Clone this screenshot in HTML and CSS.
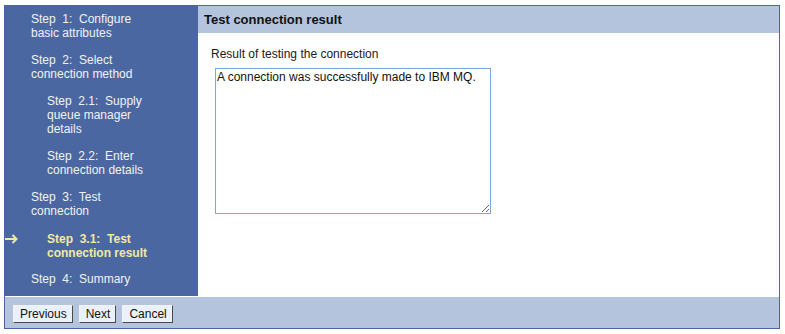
FILE: index.html
```html
<!DOCTYPE html>
<html>
<head>
<meta charset="utf-8">
<link rel="stylesheet" href="styles.css">
</head>
<body>
<div class="wizard">
  <nav class="steps">
    <div class="step"><span class="mark"></span><span class="label l1">Step&nbsp; 1:&nbsp; Configure basic attributes</span></div>
    <div class="step"><span class="mark"></span><span class="label l1">Step&nbsp; 2:&nbsp; Select connection method</span></div>
    <div class="step sub"><span class="mark"></span><span class="label l2">Step&nbsp; 2.1:&nbsp; Supply queue manager details</span></div>
    <div class="step sub"><span class="mark"></span><span class="label l2">Step&nbsp; 2.2:&nbsp; Enter connection details</span></div>
    <div class="step"><span class="mark"></span><span class="label l1">Step&nbsp; 3:&nbsp; Test connection</span></div>
    <div class="step sub current"><span class="mark"><svg class="arrow" width="13" height="10" viewBox="0 0 13 10"><path d="M0 5H11.5M7.5 1L11.5 5L7.5 9" fill="none" stroke="#f2e9a1" stroke-width="2"/></svg></span><span class="label l2">Step&nbsp; 3.1:&nbsp; Test connection result</span></div>
    <div class="step"><span class="mark"></span><span class="label l1">Step&nbsp; 4:&nbsp; Summary</span></div>
  </nav>
  <main class="panel">
    <div class="panel-head">Test connection result</div>
    <div class="panel-body">
      <div class="field-label">Result of testing the connection</div>
      <textarea class="result">A connection was successfully made to IBM MQ.</textarea>
    </div>
  </main>
  <footer class="actions">
    <button class="btn">Previous</button>
    <button class="btn">Next</button>
    <button class="btn">Cancel</button>
  </footer>
</div>
</body>
</html>
```
FILE: styles.css
```css
html, body {
  margin: 0;
  padding: 0;
  background: #ffffff;
}
body {
  padding: 5px 5px 5px 4px;
  font-family: "Liberation Sans", Arial, sans-serif;
  font-size: 12px;
}
.wizard {
  width: 776px;
  box-sizing: border-box;
  border: 1px solid #4b67a1;
  display: grid;
  grid-template-columns: 193px 1fr;
  grid-template-rows: 290px 32px;
}
.steps {
  background: #4b67a1;
  color: #f2f2f2;
  padding-top: 6px;
  display: flex;
  flex-direction: column;
  gap: 13px;
  line-height: 14px;
}
.step {
  display: flex;
}
.mark {
  width: 26px;
  flex: none;
  display: flex;
  align-items: center;
  height: 14px;
}
.arrow {
  display: block;
}
.sub .label {
  margin-left: 16px;
}
.label.l1 { width: 118px; }
.label.l2 { width: 102px; }
.current {
  margin-top: 1px;
  margin-bottom: -1px;
}
.current .label {
  font-weight: bold;
  color: #f2e9a1;
}
.panel {
  background: #ffffff;
  border-right: 1px solid #4b67a1;
  margin-right: -1px;
  display: flex;
  flex-direction: column;
}
.panel-head {
  background: #b3c4dc;
  height: 27px;
  line-height: 27px;
  padding-left: 6px;
  font-weight: bold;
  font-size: 13px;
  color: #111111;
}
.panel-body {
  padding: 14px 0 0 13px;
}
.field-label {
  color: #1a1a1a;
  line-height: 14px;
}
.result {
  display: block;
  margin: 7px 0 0 4px;
  width: 276px;
  height: 146px;
  box-sizing: border-box;
  border: 1px solid #84a8d4;
  padding: 1px 1px;
  font-family: "Liberation Sans", Arial, sans-serif;
  font-size: 12px;
  line-height: 14px;
  color: #111111;
  background: #ffffff;
}
.actions {
  grid-column: 1 / 3;
  background: #b3c4dc;
  border-top: 1px solid #ffffff;
  display: flex;
  align-items: flex-start;
  gap: 6px;
  padding: 8px 0 0 8px;
}
.btn {
  font-family: "Liberation Sans", Arial, sans-serif;
  font-size: 12px;
  height: 18px;
  padding: 0 5px 0 6px;
  background: #eaf1fb;
  color: #111111;
  border: 1px solid;
  border-color: #f4f4f4 #4a4a4a #4a4a4a #f4f4f4;
  line-height: 16px;
  margin: 0;
}
```
